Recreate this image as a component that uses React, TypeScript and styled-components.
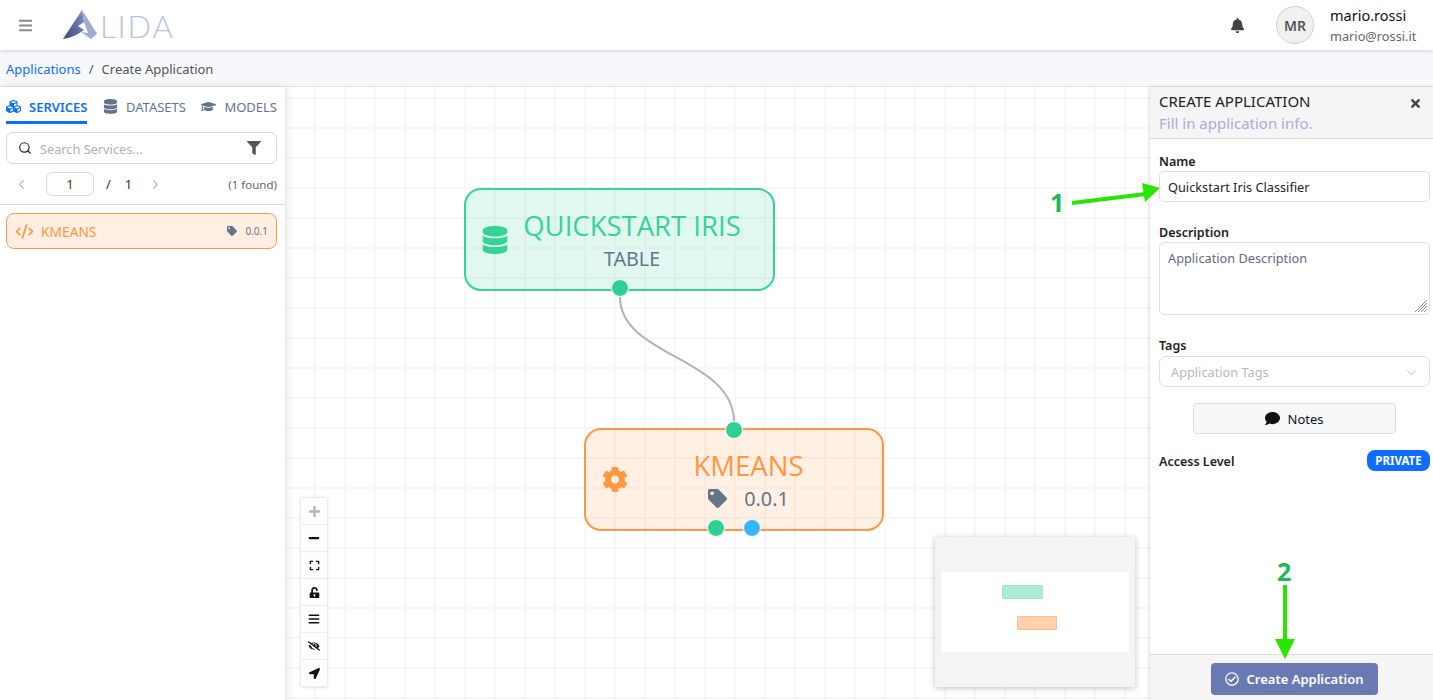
import React from "react";
import styled, { createGlobalStyle } from "styled-components";
import {
  FaBars, FaBell, FaCubes, FaDatabase, FaGraduationCap, FaFilter, FaTag, FaCog,
  FaComment, FaTimes, FaPlus, FaMinus, FaExpand, FaUnlockAlt, FaEyeSlash, FaLocationArrow, FaRegCheckCircle,
} from "react-icons/fa";
import { ChevronLeft, ChevronRight, ChevronDown, CodeXml, Search } from "lucide-react";

const FONT = `"Noto Sans", "Open Sans", "Liberation Sans", sans-serif`;

const Global = createGlobalStyle`
  html, body { margin: 0; padding: 0; height: 100%; overflow: hidden; }
  body { font-family: ${FONT}; background: #fff; color: #212529; }
  * { box-sizing: border-box; }
`;

const Page = styled.div`
  position: relative;
  height: 700px;
  display: flex;
  flex-direction: column;
  overflow: hidden;
`;

const Header = styled.header`
  height: 50px;
  flex: none;
  display: flex;
  align-items: center;
  padding: 0 15px 0 18px;
  background: #fff;
  box-shadow: 0 1px 4px rgba(0, 0, 0, 0.16);
  position: relative;
  z-index: 3;
`;

const Burger = styled.span`
  display: flex;
  color: #8a8a8a;
  font-size: 15px;
  margin-right: 30px;
`;

const LogoMark = styled.svg`
  width: 36px;
  height: 32px;
  flex: none;
`;

const LogoWord = styled.span`
  font-family: "Lato", ${FONT};
  font-weight: 300;
  font-size: 31px;
  line-height: 1;
  letter-spacing: 1.9px;
  color: #b6c1e2;
  margin: 2px 0 0 1px;
`;

const HeaderSpacer = styled.div`
  flex: 1;
`;

const BellWrap = styled.span`
  display: flex;
  color: #444;
  font-size: 15px;
  margin-right: 31px;
`;

const Avatar = styled.div`
  width: 38px;
  height: 38px;
  border-radius: 50%;
  background: #f1f1f1;
  border: 1px solid #cfcfcf;
  color: #555;
  font-size: 14px;
  font-weight: 600;
  display: flex;
  align-items: center;
  justify-content: center;
  margin-right: 16px;
`;

const UserBlock = styled.div`
  display: flex;
  flex-direction: column;
  width: 88px;
`;

const UserName = styled.span`
  font-size: 14.5px;
  line-height: 20px;
  margin-bottom: 1px;
  color: #111;
`;

const UserMail = styled.span`
  font-size: 12.75px;
  line-height: 20px;
  color: #666;
`;

const Crumbs = styled.nav`
  height: 37px;
  flex: none;
  display: flex;
  align-items: center;
  padding: 1px 6px 0;
  background: #f6f8fb;
  border-bottom: 1px solid #dfe3ea;
  font-size: 13px;
  color: #555;
`;

const CrumbLink = styled.a`
  color: #0d6efd;
`;

const CrumbSep = styled.span`
  margin: 0 8px;
`;

const Main = styled.main`
  flex: 1;
  display: flex;
  min-height: 0;
`;

const Sidebar = styled.aside`
  width: 285px;
  flex: none;
  background: #fff;
  display: flex;
  flex-direction: column;
  box-shadow: 2px 0 8px rgba(0, 0, 0, 0.1);
  position: relative;
  z-index: 2;
`;

const Tabs = styled.div`
  display: flex;
  height: 37px;
  padding: 9px 8px 0 6px;
  justify-content: space-between;
`;

const Tab = styled.div<{ $active?: boolean }>`
  display: flex;
  align-items: flex-start;
  gap: 8px;
  height: 28px;
  padding-top: 2px;
  font-size: 13px;
  line-height: 18px;
  font-weight: ${(p) => (p.$active ? 600 : 400)};
  color: ${(p) => (p.$active ? "#0d6efd" : "#64748b")};
  border-bottom: ${(p) => (p.$active ? "3px solid #0d6efd" : "3px solid transparent")};
  svg { font-size: 15px; margin-top: 1px; flex: none; }
`;

const SearchBox = styled.div`
  margin: 8px 8px 0 6px;
  height: 32px;
  border: 1px solid #d9d9d9;
  border-radius: 7px;
  display: flex;
  align-items: center;
  padding: 0 15px 0 11px;
  gap: 8px;
`;

const SearchInput = styled.input`
  flex: 1;
  min-width: 0;
  border: 0;
  outline: 0;
  padding: 1px 0 0;
  font: 12.75px ${FONT};
  background: transparent;
  &::placeholder { color: #b0b0b0; opacity: 1; }
`;

const Pager = styled.div`
  display: flex;
  align-items: center;
  height: 24px;
  margin: 8px 8px 0 14px;
  font-size: 13px;
  color: #333;
`;

const PageBox = styled.div`
  width: 48px;
  height: 24px;
  margin: 0 12px 0 17px;
  border: 1px solid #d9d9d9;
  border-radius: 6px;
  display: flex;
  align-items: center;
  justify-content: center;
`;

const PageTotal = styled.span`
  margin: 0 16px 0 14px;
`;

const Found = styled.span`
  margin-left: auto;
  font-size: 11.5px;
  color: #666;
`;

const SideDivider = styled.div`
  height: 1px;
  background: #dcdcdc;
  margin-top: 8px;
`;

const ServiceItem = styled.div`
  height: 36px;
  margin: 8px 8px 0 6px;
  background: #ffeee2;
  border: 1px solid #fd9a47;
  border-radius: 8px;
  display: flex;
  align-items: center;
  padding: 0 8px;
  color: #fd9741;
  font-size: 13.75px;
`;

const ServiceName = styled.span`
  margin-left: 7px;
  padding-top: 1px;
  flex: 1;
`;

const ServiceTag = styled.span`
  display: flex;
  color: #64748b;
  font-size: 10px;
`;

const ServiceVersion = styled.span`
  font-size: 10px;
  color: #64748b;
  margin-left: 8px;
`;

const Canvas = styled.section`
  flex: 1;
  position: relative;
  min-width: 0;
  background-color: #fff;
  background-image:
    linear-gradient(to right, #f7f7f7 2px, transparent 2px),
    linear-gradient(to bottom, #f7f7f7 2px, transparent 2px);
  background-size: 30px 30px;
  background-position: -1px 10px;
  overflow: hidden;
`;

const Node = styled.div<{ $color: string; $bg: string; $x: number; $y: number; $w: number }>`
  position: absolute;
  left: ${(p) => p.$x}px;
  top: ${(p) => p.$y}px;
  width: ${(p) => p.$w}px;
  height: 103px;
  border: 2px solid ${(p) => p.$color};
  border-radius: 17px;
  background: ${(p) => p.$bg};
  color: ${(p) => p.$color};
  display: flex;
  align-items: center;
  padding-left: 16px;
`;

const NodeIcon = styled.span`
  display: flex;
  font-size: 28px;
  flex: none;
  width: 26px;
  justify-content: center;
`;

const NodeBody = styled.div<{ $right: number }>`
  flex: 1;
  display: flex;
  flex-direction: column;
  align-items: center;
  margin-right: ${(p) => p.$right}px;
`;

const NodeTitle = styled.div`
  font-family: "Open Sans", ${FONT};
  font-weight: 400;
  font-size: 27.5px;
  line-height: 37px;
  white-space: nowrap;
`;

const NodeSub = styled.div`
  font-weight: 400;
  font-size: 19.75px;
  line-height: 29px;
  color: #64748b;
  display: flex;
  align-items: center;
`;

const SubTag = styled.span`
  display: flex;
  font-size: 19px;
  margin-right: 17px;
`;

const Handle = styled.div<{ $x: number; $y: number; $color: string }>`
  position: absolute;
  left: ${(p) => p.$x - 9}px;
  top: ${(p) => p.$y - 9}px;
  width: 18px;
  height: 18px;
  border-radius: 50%;
  background: ${(p) => p.$color};
  border: 1px solid #fff;
`;

const EdgeLayer = styled.svg`
  position: absolute;
  inset: 0;
  width: 100%;
  height: 100%;
`;

const Controls = styled.div`
  position: absolute;
  left: 16px;
  top: 411px;
  width: 26px;
  display: flex;
  flex-direction: column;
  box-shadow: 0 0 3px rgba(0, 0, 0, 0.2);
`;

const ControlBtn = styled.div<{ $muted?: boolean }>`
  height: 27px;
  display: flex;
  align-items: center;
  justify-content: center;
  background: #fefefe;
  border-bottom: 1px solid #eee;
  color: ${(p) => (p.$muted ? "#b5b5b5" : "#111")};
  font-size: 11px;
`;

const MiniMap = styled.div`
  position: absolute;
  left: 650px;
  top: 450px;
  width: 200px;
  height: 150px;
  background: #f4f4f4;
  box-shadow: 0 1px 6px rgba(0, 0, 0, 0.25);
  padding: 35px 6px 0;
`;

const MiniView = styled.div`
  position: relative;
  height: 80px;
  background: #fff;
`;

const MiniNode = styled.div<{ $x: number; $y: number; $w: number; $bg: string; $border: string }>`
  position: absolute;
  left: ${(p) => p.$x}px;
  top: ${(p) => p.$y}px;
  width: ${(p) => p.$w}px;
  height: 14px;
  background: ${(p) => p.$bg};
  border: 1px solid ${(p) => p.$border};
  border-radius: 1px;
`;

const Panel = styled.aside`
  width: 283px;
  flex: none;
  background: #fff;
  display: flex;
  flex-direction: column;
  box-shadow: -1px 0 3px rgba(0, 0, 0, 0.15);
  position: relative;
  z-index: 2;
`;

const PanelHead = styled.div`
  height: 52px;
  flex: none;
  background: #f5f5f5;
  border-bottom: 1px solid #dcdcdc;
  padding: 3px 11px 0 9px;
  position: relative;
`;

const PanelTitle = styled.div`
  font-size: 15px;
  line-height: 22px;
  color: #222;
`;

const PanelSub = styled.div`
  font-size: 15px;
  line-height: 22px;
  color: #a9acd9;
`;

const CloseBtn = styled.span`
  position: absolute;
  right: 11px;
  top: 10px;
  display: flex;
  color: #444;
  font-size: 13px;
`;

const PanelBody = styled.div`
  flex: 1;
  padding: 13px 3px 0 9px;
  display: flex;
  flex-direction: column;
`;

const FieldLabel = styled.label`
  display: block;
  font-size: 12.5px;
  font-weight: 600;
  line-height: 19px;
  color: #222;
`;

const TextField = styled.input`
  display: block;
  width: 100%;
  height: 31px;
  border: 1px solid #dedede;
  border-radius: 5px;
  padding: 0 8px;
  font: 12.75px ${FONT};
  color: #222;
  outline: 0;
  margin-bottom: 21px;
`;

const AreaWrap = styled.div`
  position: relative;
  height: 73px;
  margin-bottom: 21px;
`;

const TextArea = styled.textarea`
  display: block;
  width: 100%;
  height: 100%;
  border: 1px solid #dedede;
  border-radius: 5px;
  padding: 6px 8px;
  font: 12.75px/18px ${FONT};
  color: #5f6b7c;
  outline: 0;
  resize: none;
`;

const ResizeGrip = styled.svg`
  position: absolute;
  right: 2px;
  bottom: 2px;
  width: 14px;
  height: 14px;
`;

const SelectBox = styled.div`
  height: 31px;
  margin-top: 1px;
  border: 1px solid #dedede;
  border-radius: 7px;
  display: flex;
  align-items: center;
  justify-content: space-between;
  padding: 1px 9px 0 11px;
  font-size: 12.75px;
  color: #b9b9b9;
`;

const NotesBtn = styled.div`
  align-self: center;
  margin: 16px 1px 0 0;
  width: 203px;
  height: 31px;
  display: flex;
  align-items: center;
  justify-content: center;
  gap: 8px;
  background: #f7f8fa;
  border: 1px solid #dedede;
  border-radius: 4px;
  font-size: 13px;
  color: #111;
`;

const AccessRow = styled.div`
  display: flex;
  align-items: center;
  justify-content: space-between;
  margin-top: 16px;
  height: 21px;
`;

const AccessLabel = styled.span`
  font-size: 12.5px;
  font-weight: 600;
  padding-top: 2px;
  color: #222;
`;

const PrivatePill = styled.span`
  background: #0d6efd;
  color: #fff;
  font-size: 11.5px;
  font-weight: 700;
  height: 21px;
  width: 63px;
  border-radius: 8px;
  display: flex;
  align-items: center;
  justify-content: center;
`;

const PanelFoot = styled.div`
  height: 46px;
  flex: none;
  background: #f5f5f5;
  border-top: 1px solid #dcdcdc;
  display: flex;
  align-items: flex-start;
  justify-content: center;
  padding: 8px 0 0 5px;
`;

const CreateBtn = styled.button`
  width: 167px;
  height: 32px;
  border: 0;
  border-radius: 4px;
  background: #6b79b2;
  color: #fff;
  font: 600 13px ${FONT};
  display: flex;
  align-items: center;
  justify-content: center;
  gap: 8px;
  svg { font-size: 14px; }
`;

const AnnotationLayer = styled.svg`
  position: absolute;
  inset: 0;
  width: 1433px;
  height: 700px;
  z-index: 5;
  pointer-events: none;
`;

const Callout = styled.span<{ $x: number; $y: number }>`
  position: absolute;
  left: ${(p) => p.$x}px;
  top: ${(p) => p.$y}px;
  z-index: 6;
  font-size: 25px;
  font-weight: 700;
  line-height: 30px;
  color: #1fb858;
`;

const App: React.FC = () => (
  <Page>
    <Global />
    <Header>
      <Burger><FaBars /></Burger>
      <LogoMark viewBox="0 0 36 32">
        <defs>
          <linearGradient id="lg" x1="0" y1="1" x2="1" y2="0">
            <stop offset="0" stopColor="#3a4680" />
            <stop offset="1" stopColor="#8592c8" />
          </linearGradient>
        </defs>
        <path d="M19 1 L0 30 Q10 29 21 21 L15 17 L21 13 Z" fill="url(#lg)" />
        <path d="M19 1 L21 13 L25 24 L18 23 L28 30 L34 25 L33 23 Z" fill="#9eabd9" />
      </LogoMark>
      <LogoWord>LIDA</LogoWord>
      <HeaderSpacer />
      <BellWrap><FaBell /></BellWrap>
      <Avatar>MR</Avatar>
      <UserBlock>
        <UserName>mario.rossi</UserName>
        <UserMail>mario@rossi.it</UserMail>
      </UserBlock>
    </Header>
    <Crumbs>
      <CrumbLink>Applications</CrumbLink>
      <CrumbSep>/</CrumbSep>
      <span>Create Application</span>
    </Crumbs>
    <Main>
      <Sidebar>
        <Tabs>
          <Tab $active><FaCubes />SERVICES</Tab>
          <Tab><FaDatabase />DATASETS</Tab>
          <Tab><FaGraduationCap />MODELS</Tab>
        </Tabs>
        <SearchBox>
          <Search size={14} color="#222" />
          <SearchInput placeholder="Search Services..." />
          <FaFilter color="#555" size={14} />
        </SearchBox>
        <Pager>
          <ChevronLeft size={15} color="#bbb" />
          <PageBox>1</PageBox>
          <span>/</span>
          <PageTotal>1</PageTotal>
          <ChevronRight size={15} color="#bbb" />
          <Found>(1 found)</Found>
        </Pager>
        <SideDivider />
        <ServiceItem>
          <CodeXml size={19} strokeWidth={2.2} />
          <ServiceName>KMEANS</ServiceName>
          <ServiceTag><FaTag /></ServiceTag>
          <ServiceVersion>0.0.1</ServiceVersion>
        </ServiceItem>
      </Sidebar>
      <Canvas>
        <EdgeLayer>
          <path d="M335 210 C335 270 449 270 449 335" fill="none" stroke="#b1b1b7" strokeWidth="2" />
        </EdgeLayer>
        <Node $x={179} $y={101} $w={311} $color="#36d399" $bg="rgba(54,211,153,0.15)">
          <NodeIcon><FaDatabase /></NodeIcon>
          <NodeBody $right={17}>
            <NodeTitle>QUICKSTART IRIS</NodeTitle>
            <NodeSub>TABLE</NodeSub>
          </NodeBody>
        </Node>
        <Handle $x={335} $y={201} $color="#2fd094" />
        <Node $x={299} $y={341} $w={300} $color="#fd9741" $bg="rgba(253,151,65,0.15)">
          <NodeIcon><FaCog size={29} /></NodeIcon>
          <NodeBody $right={13}>
            <NodeTitle>KMEANS</NodeTitle>
            <NodeSub><SubTag><FaTag /></SubTag>0.0.1</NodeSub>
          </NodeBody>
        </Node>
        <Handle $x={449} $y={343} $color="#2fd094" />
        <Handle $x={431} $y={441} $color="#2fd094" />
        <Handle $x={467} $y={441} $color="#38b6ff" />
        <Controls>
          <ControlBtn $muted><FaPlus size={13} /></ControlBtn>
          <ControlBtn><FaMinus size={12} /></ControlBtn>
          <ControlBtn><FaExpand /></ControlBtn>
          <ControlBtn><FaUnlockAlt /></ControlBtn>
          <ControlBtn><FaBars size={12} /></ControlBtn>
          <ControlBtn><FaEyeSlash size={12} /></ControlBtn>
          <ControlBtn><FaLocationArrow /></ControlBtn>
        </Controls>
        <MiniMap>
          <MiniView>
            <MiniNode $x={61} $y={13} $w={41} $bg="#aeecd6" $border="#9be6cb" />
            <MiniNode $x={76} $y={44} $w={40} $bg="#fed0ae" $border="#fdbf90" />
          </MiniView>
        </MiniMap>
      </Canvas>
      <Panel>
        <PanelHead>
          <PanelTitle>CREATE APPLICATION</PanelTitle>
          <PanelSub>Fill in application info.</PanelSub>
          <CloseBtn><FaTimes /></CloseBtn>
        </PanelHead>
        <PanelBody>
          <FieldLabel>Name</FieldLabel>
          <TextField defaultValue="Quickstart Iris Classifier" />
          <FieldLabel>Description</FieldLabel>
          <AreaWrap>
            <TextArea defaultValue="Application Description" />
            <ResizeGrip viewBox="0 0 14 14">
              <path d="M13 1 L1 13 M13 4 L4 13 M13 7 L7 13 M13 10 L10 13" stroke="#8a8a8a" strokeWidth="1" fill="none" />
            </ResizeGrip>
          </AreaWrap>
          <FieldLabel>Tags</FieldLabel>
          <SelectBox>
            Application Tags
            <ChevronDown size={17} strokeWidth={1.2} color="#b8b8b8" />
          </SelectBox>
          <NotesBtn><FaComment size={15} />Notes</NotesBtn>
          <AccessRow>
            <AccessLabel>Access Level</AccessLabel>
            <PrivatePill>PRIVATE</PrivatePill>
          </AccessRow>
        </PanelBody>
        <PanelFoot>
          <CreateBtn><FaRegCheckCircle />Create Application</CreateBtn>
        </PanelFoot>
      </Panel>
    </Main>
    <AnnotationLayer viewBox="0 0 1433 700">
      <line x1="1072" y1="203" x2="1146" y2="194" stroke="#28e600" strokeWidth="4" />
      <polygon points="1160,188 1142,183 1145,202" fill="#28e600" />
      <line x1="1285" y1="585" x2="1285" y2="642" stroke="#28e600" strokeWidth="4" />
      <polygon points="1275,639 1295,639 1285,659" fill="#28e600" />
    </AnnotationLayer>
    <Callout $x={1050} $y={187}>1</Callout>
    <Callout $x={1277} $y={556}>2</Callout>
  </Page>
);

export default App;
